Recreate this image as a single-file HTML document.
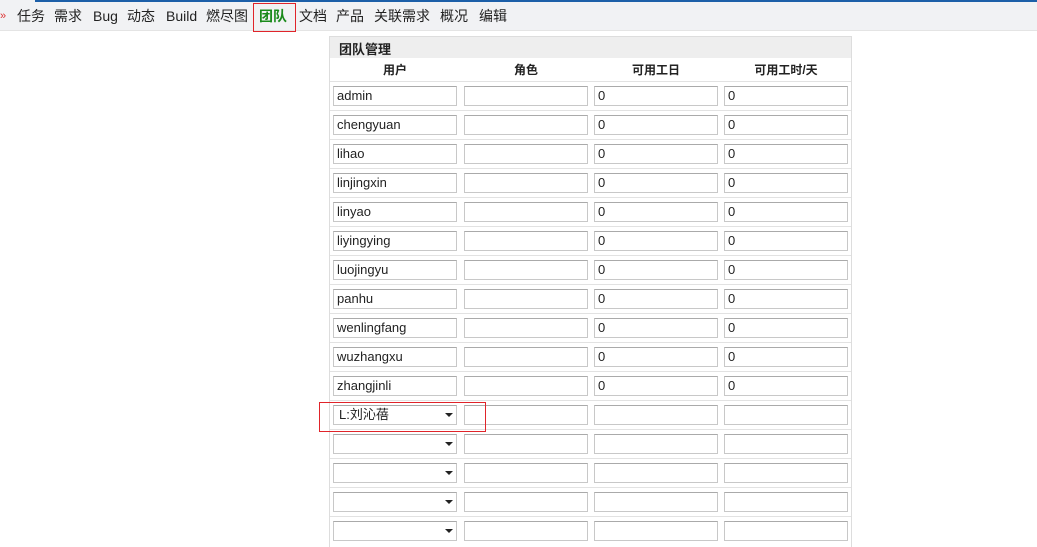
<!DOCTYPE html>
<html><head><meta charset="utf-8"><style>
body{margin:0;width:1037px;height:546px;background:#fff;position:relative;overflow:hidden;font-family:"Liberation Sans","Noto Sans CJK SC",sans-serif;font-size:14px;color:#222}
.nav{position:absolute;left:0;top:0;width:1037px;height:30px;background:#f1f2f4;border-bottom:1px solid #e4e4e4}
.blue{position:absolute;left:35px;top:0;width:1002px;height:2px;background:#1c5fa8}
.nav span{position:absolute;top:6px;font-size:14px;line-height:20px;height:20px}
.box{position:absolute;border:1px solid #e0242a}
.tbl{position:absolute;left:329px;top:36px;width:521px;height:510px;border:1px solid #ddd;border-bottom:none}
.hd{position:absolute;left:330px;top:37px;width:521px;height:21px;background:#eee;font-weight:bold;font-size:13px}
.ch{position:absolute;top:61px;font-weight:bold;font-size:12px;transform:translateX(-50%)}
.ln{position:absolute;left:330px;width:521px;height:1px;background:#e2e2e2}
.in{position:absolute;height:18px;width:119px;border:1px solid #c8c8c8;border-top-color:#aaa;font-size:13px;line-height:18px;padding-left:3px;box-sizing:content-box}
.arr{position:absolute;width:0;height:0;border-left:4px solid transparent;border-right:4px solid transparent;border-top:4px solid #222}
</style></head><body>
<div class="nav"><div class="blue"></div>
<span style="left:0;color:#d33;font-size:11px">»</span>
<span style="left:17px">任务</span><span style="left:54px">需求</span><span style="left:93px">Bug</span><span style="left:127px">动态</span><span style="left:166px">Build</span><span style="left:206px">燃尽图</span><span style="left:259px;color:#1a8a1a;font-weight:bold">团队</span><span style="left:299px">文档</span><span style="left:336px">产品</span><span style="left:374px">关联需求</span><span style="left:440px">概况</span><span style="left:479px">编辑</span>
</div>
<div class="box" style="left:253px;top:3px;width:41px;height:27px"></div>
<div class="tbl"></div>
<div class="hd"><span style="position:absolute;left:9px;top:2px">团队管理</span></div>
<div class="ch" style="left:395px">用户</div><div class="ch" style="left:526px">角色</div><div class="ch" style="left:656px">可用工日</div><div class="ch" style="left:786px">可用工时/天</div>
<div id="rows"></div>
<div class="box" style="left:319px;top:402px;width:165px;height:28px"></div>
<script>
var names=["admin","chengyuan","lihao","linjingxin","linyao","liyingying","luojingyu","panhu","wenlingfang","wuzhangxu","zhangjinli","L:刘沁蓓","","","",""];
var h="";var xs=[333,464,594,724];
for(var i=0;i<16;i++){var t=81+i*29;h+='<div class="ln" style="top:'+t+'px"></div>';
var y=t+5;
for(var c=0;c<4;c++){var txt="";if(c==0)txt=names[i];if((c==2||c==3)&&i<11)txt="0";
h+='<div class="in" style="left:'+xs[c]+'px;top:'+y+'px">'+(c==0&&i>=11?'<span style="padding-left:2px">'+txt+'</span>':txt)+'</div>';
if(c==0&&i>=11)h+='<div class="arr" style="left:445px;top:'+(y+8)+'px"></div>';}}
document.getElementById("rows").innerHTML=h;
</script>
</body></html>
